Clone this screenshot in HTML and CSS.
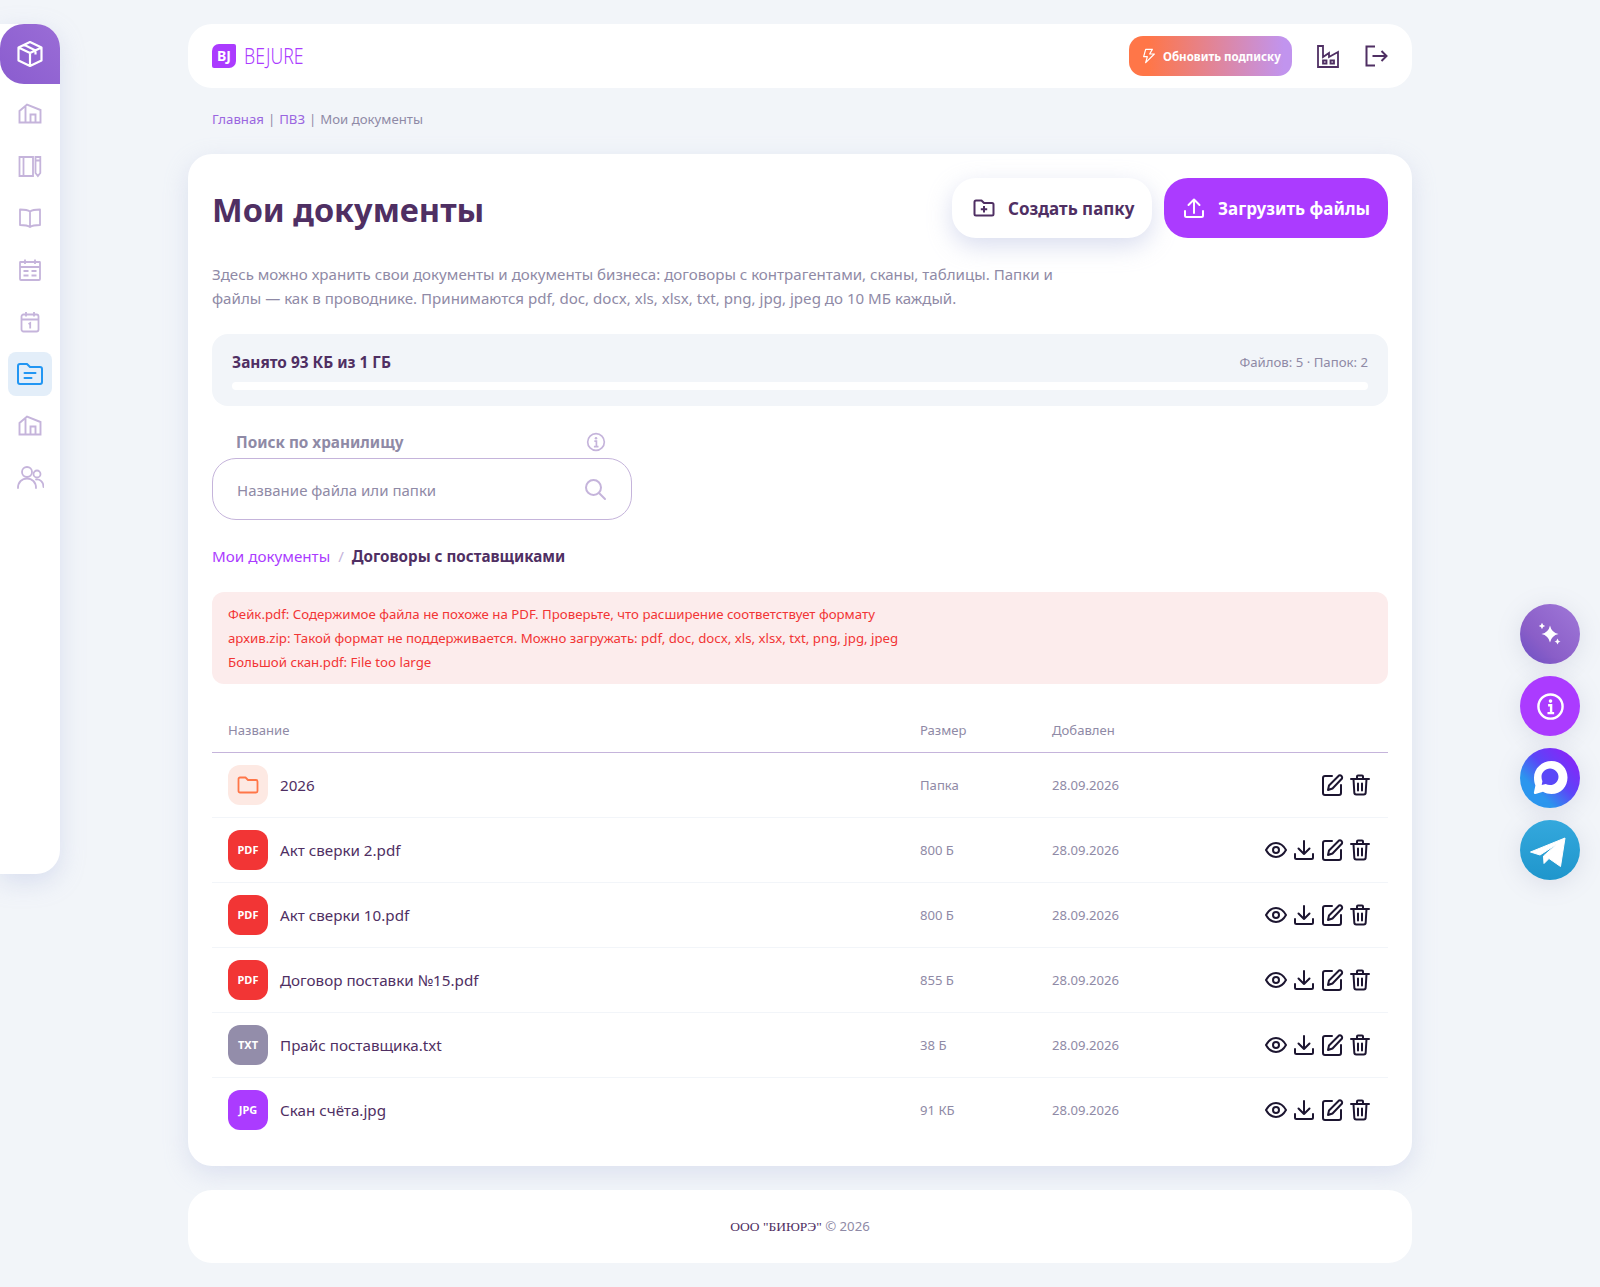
FILE: index.html
```html
<!DOCTYPE html>
<html lang="ru">
<head>
    <meta charset="UTF-8">
    <meta name="viewport" content="width=device-width, initial-scale=1.0">
    <title>Мои документы</title>
    <link rel="stylesheet" href="styles.css">
</head>
<body>
    <svg class="sprite" width="0" height="0">
        <symbol id="i-warehouse" viewBox="0 0 24 24"><path d="M1.500 20.500V9L9 2.500 22.500 8v12.500zM7.500 20.500V4M1.500 20.500h21M12.500 20.500v-8h5v8" fill="none" stroke="currentColor" stroke-width="1.900"/></symbol>
        <symbol id="i-eye" viewBox="0 0 24 24"><path d="M2 12c2.500-4.500 6-7 10-7s7.500 2.500 10 7c-2.500 4.500-6 7-10 7s-7.500-2.500-10-7z" fill="none" stroke="currentColor" stroke-width="2" stroke-linejoin="round"/><circle cx="12" cy="12" r="3" fill="none" stroke="currentColor" stroke-width="2"/></symbol>
        <symbol id="i-download" viewBox="0 0 24 24"><path d="M12 3v13M6.500 10.500 12 16l5.500-5.500M3 16v3.500A1.500 1.500 0 0 0 4.500 21h15a1.500 1.500 0 0 0 1.500-1.500V16" fill="none" stroke="currentColor" stroke-width="2" stroke-linecap="round" stroke-linejoin="round"/></symbol>
        <symbol id="i-edit" viewBox="0 0 24 24"><path d="M12 3H5a2 2 0 0 0-2 2v15a2 2 0 0 0 2 2h14a2 2 0 0 0 2-2v-8" fill="none" stroke="currentColor" stroke-width="2" stroke-linecap="round"/><path d="M19 2.500a2.300 2.300 0 0 1 3 3L12.500 15.500 8 17l1-4.500z" fill="none" stroke="currentColor" stroke-width="2" stroke-linejoin="round"/></symbol>
        <symbol id="i-trash" viewBox="0 0 24 24"><path d="M3 6h18M9 6V3.500A1 1 0 0 1 10 2.500h4a1 1 0 0 1 1 1V6M5.500 6l.8 13.500A2 2 0 0 0 8.300 21.500h7.400a2 2 0 0 0 2-2L18.500 6M10 10.500v7M14 10.500v7" fill="none" stroke="currentColor" stroke-width="2" stroke-linecap="round" stroke-linejoin="round"/></symbol>
        <symbol id="i-info" viewBox="0 0 24 24"><circle cx="12" cy="12" r="10" fill="none" stroke="currentColor" stroke-width="2"/><circle cx="12" cy="7.500" r="1.500" fill="currentColor"/><path d="M10 11h2.500v6M9.500 17.500h5.500" fill="none" stroke="currentColor" stroke-width="2"/></symbol>
    </svg>

    <div class="page">
        <aside class="sidebar">
            <a class="side-top">
                <svg class="icon-28" viewBox="0 0 28 28"><path d="M14 2 25.500 7.500v13L14 26 2.500 20.500v-13zM2.500 7.500 14 13l11.500-5.500M14 13v13M8 4.800l11.500 5.600v4" fill="none" stroke="#fff" stroke-width="2.200" stroke-linejoin="round"/></svg>
            </a>
            <nav class="side-nav">
                <a class="side-item"><svg class="icon-24"><use href="#i-warehouse"/></svg></a>
                <a class="side-item"><svg class="icon-24" viewBox="0 0 24 24"><path d="M1.500 3h13.500v19H1.500zM5.500 3v19M17.500 3h4.800v16l-2.400 3-2.400-3zM17.500 6.500h4.800" fill="none" stroke="currentColor" stroke-width="1.800"/></svg></a>
                <a class="side-item"><svg class="icon-24" viewBox="0 0 24 24"><path d="M12 5.500C10 4 6 3.500 2 3.500v15.500c4 0 8 .5 10 2 2-1.500 6-2 10-2V3.500c-4 0-8 .5-10 2zM12 5.500V21" fill="none" stroke="currentColor" stroke-width="1.800" stroke-linejoin="round"/></svg></a>
                <a class="side-item"><svg class="icon-24" viewBox="0 0 24 24"><path d="M2.500 4h19a.5.5 0 0 1 .5.500V21a1 1 0 0 1-1 1H3a1 1 0 0 1-1-1V4.500a.5.5 0 0 1 .5-.5zM2 9h20M7 1.500V6M17 1.500V6M5.500 13h5M13.500 13h5M5.500 17.500h5M13.500 17.500h5" fill="none" stroke="currentColor" stroke-width="1.800"/></svg></a>
                <a class="side-item"><svg class="icon-24" viewBox="0 0 24 24"><rect x="3.500" y="4.500" width="17" height="17" rx="2" fill="none" stroke="currentColor" stroke-width="1.800"/><path d="M3.500 9.500h17M8 2v4.500M16 2v4.500M10.500 14l1.700-1v5.500" fill="none" stroke="currentColor" stroke-width="1.800"/></svg></a>
                <a class="side-item active"><svg class="icon-28" viewBox="0 0 28 28"><path d="M2 6a2 2 0 0 1 2-2h7l3 3h10a2 2 0 0 1 2 2v13a2 2 0 0 1-2 2H4a2 2 0 0 1-2-2zM8.500 13h11M8.500 18h7" fill="none" stroke="currentColor" stroke-width="2" stroke-linecap="round" stroke-linejoin="round"/></svg></a>
                <a class="side-item"><svg class="icon-24"><use href="#i-warehouse"/></svg></a>
                <a class="side-item"><svg class="icon-28" viewBox="0 0 28 28"><circle cx="11" cy="8" r="5" fill="none" stroke="currentColor" stroke-width="1.800"/><circle cx="21" cy="10" r="3.500" fill="none" stroke="currentColor" stroke-width="1.800"/><path d="M2 24c0-6 4-9.500 9-9.500s9 3.500 9 9.500M20 15.500c4-.5 7.500 2.500 7.500 7.500" fill="none" stroke="currentColor" stroke-width="1.800" stroke-linecap="round"/></svg></a>
            </nav>
        </aside>

        <main class="main">
            <header class="topbar">
                <a class="logo">
                    <span class="logo-mark">BJ</span>
                    <span class="logo-text">BEJURE</span>
                </a>
                <div class="topbar-right">
                    <a class="upgrade">
                        <svg class="icon-16" viewBox="0 0 24 24"><path d="M14 2H7L4 13h5.500L7 22l13-13h-7l4-7z" fill="none" stroke="#fff" stroke-width="1.800" stroke-linejoin="round"/></svg>
                        Обновить подписку
                    </a>
                    <svg class="top-icon" viewBox="0 0 24 24"><path d="M2 23V2h5v11l6-4v4l9-5v15zM7 16.500h3.500v3H7zM14.500 16.500H18v3h-3.500z" fill="none" stroke="currentColor" stroke-width="1.800"/></svg>
                    <svg class="top-icon" viewBox="0 0 24 24"><path d="M11 2.500H2.500v19H11M8.500 12H22M17.500 7l5 5-5 5" fill="none" stroke="currentColor" stroke-width="2"/></svg>
                </div>
            </header>

            <div class="crumbs">
                <a>Главная</a><i>|</i><a>ПВЗ</a><i>|</i><span>Мои документы</span>
            </div>

            <section class="card">
                <div class="card-head">
                    <h1>Мои документы</h1>
                    <div class="actions">
                        <button type="button" class="btn btn-white">
                            <svg class="icon-24" viewBox="0 0 24 24"><path d="M2.500 6a1.500 1.500 0 0 1 1.500-1.500h5.500l2.500 2.500h8a1.500 1.500 0 0 1 1.500 1.500V18a1.500 1.500 0 0 1-1.500 1.500H4A1.500 1.500 0 0 1 2.500 18zM12 10v6.500M8.800 13.200h6.400" fill="none" stroke="currentColor" stroke-width="2" stroke-linejoin="round"/></svg>
                            Создать папку
                        </button>
                        <button type="button" class="btn btn-purple">
                            <svg class="icon-24" viewBox="0 0 24 24"><path d="M12 17V3.500M6.500 9 12 3.500 17.500 9M3 15v4.500A1.500 1.500 0 0 0 4.500 21h15a1.500 1.500 0 0 0 1.500-1.500V15" fill="none" stroke="currentColor" stroke-width="2" stroke-linecap="round" stroke-linejoin="round"/></svg>
                            Загрузить файлы
                        </button>
                    </div>
                </div>

                <p class="lead">Здесь можно хранить свои документы и документы бизнеса: договоры с контрагентами, сканы, таблицы. Папки и файлы — как в проводнике. Принимаются pdf, doc, docx, xls, xlsx, txt, png, jpg, jpeg до 10 МБ каждый.</p>

                <div class="storage">
                    <div class="storage-row">
                        <b>Занято 93 КБ из 1 ГБ</b>
                        <span>Файлов: 5 · Папок: 2</span>
                    </div>
                    <div class="storage-bar"></div>
                </div>

                <div class="search">
                    <div class="search-label">
                        <label for="q">Поиск по хранилищу</label>
                        <svg class="icon-20"><use href="#i-info"/></svg>
                    </div>
                    <div class="search-box">
                        <input id="q" type="text" placeholder="Название файла или папки">
                        <svg class="icon-24" viewBox="0 0 24 24"><circle cx="10.500" cy="10.500" r="7.500" fill="none" stroke="currentColor" stroke-width="2"/><path d="m16 16 6 6" fill="none" stroke="currentColor" stroke-width="2" stroke-linecap="round"/></svg>
                    </div>
                </div>

                <div class="path">
                    <a>Мои документы</a><i>/</i><b>Договоры с поставщиками</b>
                </div>

                <div class="alert">
                    Фейк.pdf: Содержимое файла не похоже на PDF. Проверьте, что расширение соответствует формату<br>
                    архив.zip: Такой формат не поддерживается. Можно загружать: pdf, doc, docx, xls, xlsx, txt, png, jpg, jpeg<br>
                    Большой скан.pdf: File too large
                </div>

                <table class="files">
                    <thead>
                        <tr><th class="c-name">Название</th><th class="c-size">Размер</th><th class="c-date">Добавлен</th><th></th></tr>
                    </thead>
                    <tbody>
                        <tr>
                            <td><div class="file"><span class="badge b-folder"><svg class="icon-24" viewBox="0 0 24 24"><path d="M2.500 6a1.500 1.500 0 0 1 1.500-1.500h5.500l2.500 2.500h8A1.500 1.500 0 0 1 21.500 8.500V18a1.500 1.500 0 0 1-1.500 1.500H4A1.500 1.500 0 0 1 2.500 18z" fill="none" stroke="currentColor" stroke-width="1.800" stroke-linejoin="round"/></svg></span>2026</div></td>
                            <td class="muted">Папка</td><td class="muted">28.09.2026</td>
                            <td><div class="row-icons"><svg class="icon-24"><use href="#i-edit"/></svg><svg class="icon-24"><use href="#i-trash"/></svg></div></td>
                        </tr>
                        <tr>
                            <td><div class="file"><span class="badge b-pdf">PDF</span>Акт сверки 2.pdf</div></td>
                            <td class="muted">800 Б</td><td class="muted">28.09.2026</td>
                            <td><div class="row-icons"><svg class="icon-24"><use href="#i-eye"/></svg><svg class="icon-24"><use href="#i-download"/></svg><svg class="icon-24"><use href="#i-edit"/></svg><svg class="icon-24"><use href="#i-trash"/></svg></div></td>
                        </tr>
                        <tr>
                            <td><div class="file"><span class="badge b-pdf">PDF</span>Акт сверки 10.pdf</div></td>
                            <td class="muted">800 Б</td><td class="muted">28.09.2026</td>
                            <td><div class="row-icons"><svg class="icon-24"><use href="#i-eye"/></svg><svg class="icon-24"><use href="#i-download"/></svg><svg class="icon-24"><use href="#i-edit"/></svg><svg class="icon-24"><use href="#i-trash"/></svg></div></td>
                        </tr>
                        <tr>
                            <td><div class="file"><span class="badge b-pdf">PDF</span>Договор поставки №15.pdf</div></td>
                            <td class="muted">855 Б</td><td class="muted">28.09.2026</td>
                            <td><div class="row-icons"><svg class="icon-24"><use href="#i-eye"/></svg><svg class="icon-24"><use href="#i-download"/></svg><svg class="icon-24"><use href="#i-edit"/></svg><svg class="icon-24"><use href="#i-trash"/></svg></div></td>
                        </tr>
                        <tr>
                            <td><div class="file"><span class="badge b-txt">TXT</span>Прайс поставщика.txt</div></td>
                            <td class="muted">38 Б</td><td class="muted">28.09.2026</td>
                            <td><div class="row-icons"><svg class="icon-24"><use href="#i-eye"/></svg><svg class="icon-24"><use href="#i-download"/></svg><svg class="icon-24"><use href="#i-edit"/></svg><svg class="icon-24"><use href="#i-trash"/></svg></div></td>
                        </tr>
                        <tr>
                            <td><div class="file"><span class="badge b-jpg">JPG</span>Скан счёта.jpg</div></td>
                            <td class="muted">91 КБ</td><td class="muted">28.09.2026</td>
                            <td><div class="row-icons"><svg class="icon-24"><use href="#i-eye"/></svg><svg class="icon-24"><use href="#i-download"/></svg><svg class="icon-24"><use href="#i-edit"/></svg><svg class="icon-24"><use href="#i-trash"/></svg></div></td>
                        </tr>
                    </tbody>
                </table>
            </section>

            <footer class="footer"><span>ООО "БИЮРЭ"</span> © 2026</footer>
        </main>
    </div>

    <div class="floats">
        <a class="fab fab-ai"><svg viewBox="0 0 30 30" width="30" height="30"><path d="M15 6.500Q16.500 13.500 23.500 15 16.500 16.500 15 23.500 13.500 16.500 6.500 15 13.500 13.500 15 6.500zM7 3.800Q7.500 6.500 10.200 7 7.500 7.500 7 10.200 6.500 7.500 3.800 7 6.500 6.500 7 3.800zM22.500 19.500Q23 22 25.500 22.500 23 23 22.500 25.500 22 23 19.500 22.500 22 22 22.500 19.500z" fill="#fff"/></svg></a>
        <a class="fab fab-info"><svg viewBox="0 0 24 24" width="29" height="29"><use href="#i-info"/></svg></a>
        <a class="fab fab-chat"><svg viewBox="0 0 60 60" width="60" height="60"><path d="M31.500 13c9.500 0 16 7.500 16 16.500S41 46 31.500 46c-3 0-6-.8-8.500-2.200L15.500 46c-1 .3-1.800-.5-1.600-1.500l1.500-7c-1-2.500-1.400-5-1.400-8C14 20.500 22 13 31.500 13z" fill="#fff"/><path d="M30 20.500c4.600 0 8.500 3.700 8.500 8.300s-3.900 8.300-8.500 8.300c-1.500 0-3-.4-4.300-1.100l-4 1 .7-3.700c-.6-1.400-.9-3-.9-4.500 0-4.600 3.900-8.300 8.500-8.300z" fill="#5a47f8"/></svg></a>
        <a class="fab fab-tg"><svg viewBox="0 0 60 60" width="60" height="60"><path d="M10.500 32 45 18 40.500 46.500 29 38.500 24 43.500 23.500 36 37 24 20 35z" fill="#fff" stroke="#fff" stroke-width="1" stroke-linejoin="round"/></svg></a>
    </div>
</body>
</html>
```

FILE: styles.css
```css
* {
    box-sizing: border-box;
}
body {
    margin: 0;
    background-color: #f2f5f9;
    color: #4f2f63;
    font-family: "Noto Sans", Arial, sans-serif;
    font-size: 16px;
}
a {
    color: inherit;
    text-decoration: none;
}
i {
    font-style: normal;
}
.sprite {
    position: absolute;
}
.icon-16 { width: 16px; height: 16px; flex: none; }
.icon-20 { width: 20px; height: 20px; flex: none; }
.icon-24 { width: 24px; height: 24px; flex: none; }
.icon-28 { width: 28px; height: 28px; flex: none; }

.page {
    display: flex;
    padding-top: 24px;
    padding-bottom: 24px;
}

/* sidebar */
.sidebar {
    width: 60px;
    height: 850px;
    background: #fff;
    border-radius: 0 24px 24px 0;
    box-shadow: 0 8px 24px rgba(170, 180, 220, 0.35);
    flex: none;
}
.side-top {
    display: flex;
    align-items: center;
    justify-content: center;
    height: 60px;
    background: linear-gradient(45deg, #8a5ccf, #9a6dd6);
    border-radius: 24px 24px 0 24px;
}
.side-nav {
    display: flex;
    flex-direction: column;
    align-items: center;
    gap: 8px;
    padding-top: 8px;
}
.side-item {
    display: flex;
    align-items: center;
    justify-content: center;
    width: 44px;
    height: 44px;
    border-radius: 8px;
    color: #c5b4db;
}
.side-item.active {
    background: #e3eef9;
    color: #2196f3;
}

/* main column */
.main {
    width: 1224px;
    margin-left: 128px;
}
.topbar {
    display: flex;
    align-items: center;
    justify-content: space-between;
    height: 64px;
    padding: 0 24px;
    background: #fff;
    border-radius: 24px;
}
.logo {
    display: flex;
    align-items: center;
    gap: 8px;
}
.logo-mark {
    width: 24px;
    height: 24px;
    background: #ab3bff;
    border-radius: 7px 2px 7px 2px;
    color: #fff;
    font-size: 14px;
    font-weight: 700;
    line-height: 24px;
    text-align: center;
}
.logo-text {
    display: inline-block;
    color: #ab3bff;
    font-size: 21px;
    font-weight: 300;
    line-height: 24px;
    transform: scaleX(0.84);
    transform-origin: left center;
}
.topbar-right {
    display: flex;
    align-items: center;
}
.upgrade {
    display: flex;
    align-items: center;
    gap: 6px;
    width: 163px;
    height: 40px;
    padding-left: 12px;
    background: linear-gradient(90deg, #ff7648 12%, #c194ee 95%);
    border-radius: 14px;
    color: #fff;
    font-size: 11.500px;
    font-weight: 700;
    white-space: nowrap;
}
.top-icon {
    width: 24px;
    height: 24px;
    color: #4f2f63;
    margin-left: 24px;
}

.crumbs {
    display: flex;
    gap: 4px;
    height: 66px;
    padding: 22px 24px 0;
    font-size: 13.200px;
    color: #8f8aa6;
}
.crumbs a {
    color: #9a66e0;
}

/* card */
.card {
    height: 1012px;
    padding: 24px;
    background: #fff;
    border-radius: 24px;
    box-shadow: 0 8px 24px rgba(170, 180, 220, 0.3);
}
.card-head {
    display: flex;
    align-items: center;
    justify-content: space-between;
    height: 60px;
}
h1 {
    margin: 0;
    padding-top: 2px;
    font-size: 32.500px;
    font-weight: 700;
    color: #4f2f63;
}
.actions {
    display: flex;
    gap: 12px;
}
.btn {
    display: flex;
    align-items: center;
    gap: 12px;
    height: 60px;
    padding: 0 18px;
    border: none;
    border-radius: 24px;
    font-family: inherit;
    font-size: 17px;
    font-weight: 700;
    white-space: nowrap;
    cursor: pointer;
}
.btn-white {
    width: 200px;
    padding-left: 20px;
    background: #fff;
    color: #4f2f63;
    box-shadow: 0 8px 24px rgba(170, 180, 220, 0.45);
}
.btn-purple {
    width: 224px;
    background: #ab3bff;
    color: #fff;
}
.lead {
    width: 880px;
    margin: 24px 0 0;
    font-size: 15.100px;
    line-height: 24px;
    color: #8f8aa6;
}
.storage {
    height: 72px;
    margin-top: 24px;
    padding: 18px 20px 0;
    background: #f2f5f9;
    border-radius: 16px;
}
.storage-row {
    display: flex;
    align-items: center;
    justify-content: space-between;
    height: 20px;
    font-size: 15.400px;
}
.storage-row span {
    font-size: 13.200px;
    color: #8f8aa6;
}
.storage-bar {
    height: 8px;
    margin-top: 10px;
    background: #fff;
    border-radius: 4px;
}
.search {
    width: 420px;
    margin-top: 22px;
}
.search-label {
    display: flex;
    align-items: center;
    justify-content: space-between;
    height: 30px;
    padding: 0 26px 2px 24px;
    font-size: 15.300px;
    font-weight: 700;
    color: #8f8aa6;
}
.search-label svg {
    color: #c5b4db;
}
.search-box {
    display: flex;
    align-items: center;
    height: 62px;
    padding: 0 24px;
    border: 1px solid #c5b4db;
    border-radius: 24px;
    color: #c5b4db;
}
.search-box input {
    flex: 1;
    padding: 2px 0 0;
    border: none;
    outline: none;
    background: none;
    font-family: inherit;
    font-size: 15px;
    color: #4f2f63;
}
.search-box input::placeholder {
    color: #8f8aa6;
}
.path {
    display: flex;
    gap: 8px;
    margin-top: 26px;
    font-size: 15.200px;
    line-height: 20px;
}
.path a {
    color: #ab3bff;
}
.path i {
    color: #c5b4db;
}
.alert {
    height: 92px;
    margin-top: 26px;
    padding: 10px 16px;
    background: #fcecec;
    border-radius: 12px;
    color: #f23535;
    font-size: 13.250px;
    line-height: 24px;
}

/* files table */
.files {
    width: 100%;
    margin-top: 24px;
    border-collapse: collapse;
    table-layout: fixed;
}
.files th {
    height: 44px;
    padding: 0 16px;
    border-bottom: 1px solid #c5b4db;
    color: #8f8aa6;
    font-size: 13.100px;
    font-weight: 400;
    text-align: left;
}
.c-name { width: 692px; }
.c-size { width: 132px; }
.c-date { width: 132px; }
.files td {
    height: 65px;
    padding: 0 16px;
    border-bottom: 1px solid #f2f5f9;
}
.files tr:last-child td {
    border-bottom: none;
}
.files td.muted {
    color: #8f8aa6;
    font-size: 13.100px;
}
.file {
    display: flex;
    align-items: center;
    gap: 12px;
    font-size: 15.200px;
}
.badge {
    display: flex;
    align-items: center;
    justify-content: center;
    width: 40px;
    height: 40px;
    border-radius: 12px;
    color: #fff;
    font-size: 11px;
    font-weight: 700;
}
.b-folder { background: #fde9e3; color: #ff7648; }
.b-pdf { background: #f23535; }
.b-txt { background: #938daa; }
.b-jpg { background: #ab3bff; }
.row-icons {
    display: flex;
    justify-content: flex-end;
    gap: 4px;
    color: #1c1530;
}

/* footer */
.footer {
    height: 73px;
    margin-top: 24px;
    background: #fff;
    border-radius: 24px;
    color: #8f8aa6;
    font-size: 13.200px;
    line-height: 73px;
    text-align: center;
}
.footer span {
    color: #4f2f63;
    font-family: "Liberation Serif", serif;
    font-size: 13.500px;
}

/* floating buttons */
.floats {
    position: fixed;
    top: 604px;
    right: 20px;
    display: flex;
    flex-direction: column;
    gap: 12px;
}
.fab {
    display: flex;
    align-items: center;
    justify-content: center;
    width: 60px;
    height: 60px;
    border-radius: 50%;
    color: #fff;
    box-shadow: 0 4px 24px rgba(120, 130, 160, 0.18);
}
.fab-ai { background: linear-gradient(45deg, #6a4fc4 0%, #8a5ec8 35%, #a078d8 100%); }
.fab-info { background: #ab3bff; }
.fab-chat { background: linear-gradient(45deg, #2b96ee 28%, #5b45f8 55%, #8428f8 85%); }
.fab-tg { background: linear-gradient(180deg, #34a8dd, #1f96cc); }
```
